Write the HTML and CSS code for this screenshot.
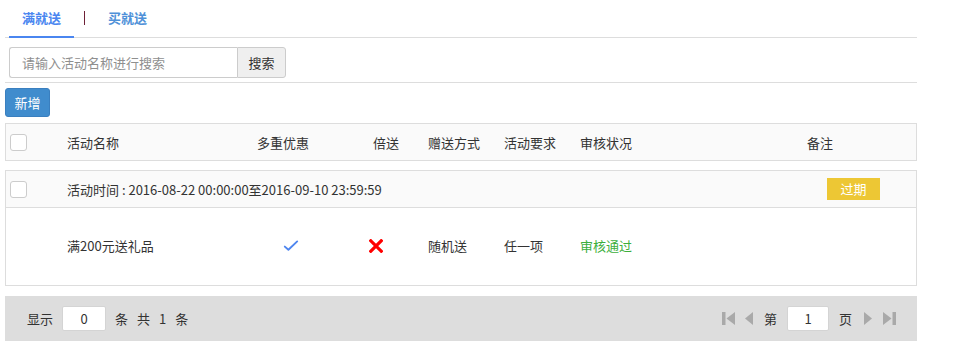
FILE: index.html
```html
<!DOCTYPE html>
<html lang="zh-CN">
<head>
<meta charset="utf-8">
<title>满就送</title>
<link rel="stylesheet" href="styles.css">
</head>
<body>
<div class="page">
  <div class="tabs">
    <a class="tab active">满就送</a>
    <span class="tab-sep"></span>
    <a class="tab">买就送</a>
  </div>

  <div class="search-row">
    <div class="search">
      <input class="search-input" type="text" placeholder="请输入活动名称进行搜索">
      <button class="search-btn">搜索</button>
    </div>
  </div>

  <button class="btn-add">新增</button>

  <div class="thead grid">
    <div class="c-check"><span class="checkbox"></span></div>
    <div>活动名称</div>
    <div>多重优惠</div>
    <div>倍送</div>
    <div>赠送方式</div>
    <div>活动要求</div>
    <div>审核状况</div>
    <div class="c-note">备注</div>
  </div>

  <div class="group">
    <div class="group-head">
      <div class="c-check"><span class="checkbox"></span></div>
      <div class="group-time">活动时间 : 2016-08-22 00:00:00至2016-09-10 23:59:59</div>
      <span class="badge">过期</span>
    </div>
    <div class="group-body grid">
      <div class="c-check"></div>
      <div>满200元送礼品</div>
      <div class="c-multi">
        <svg class="ico-check" width="16" height="12" viewBox="0 0 16 12"><path d="M1.8 6.6 L5.4 9.8 L14.2 1.4" fill="none" stroke="#4f86ef" stroke-width="1.9" stroke-linecap="round" stroke-linejoin="round"/></svg>
      </div>
      <div class="c-double">
        <svg class="ico-cross" width="14" height="14" viewBox="0 0 14 14"><path d="M1.8 1.8 L12.2 12.2 M12.2 1.8 L1.8 12.2" stroke="#ff0000" stroke-width="3.2" stroke-linecap="square"/></svg>
      </div>
      <div>随机送</div>
      <div>任一项</div>
      <div class="ok">审核通过</div>
      <div></div>
    </div>
  </div>

  <div class="footer">
    <div class="f-left">
      <span>显示</span>
      <input class="f-input" type="text" value="0">
      <span class="f-word">条</span>
      <span class="f-word">共</span>
      <span class="f-word">1</span>
      <span class="f-word">条</span>
    </div>
    <div class="f-right">
      <svg class="pg" width="13" height="13" viewBox="0 0 13 13"><rect x="0" y="0" width="3.5" height="13" fill="#a9a9a9"/><path d="M13 0 L4.5 6.5 L13 13 Z" fill="#a9a9a9"/></svg>
      <svg class="pg pg-prev" width="8" height="13" viewBox="0 0 8 13"><path d="M8 0 L0 6.5 L8 13 Z" fill="#a9a9a9"/></svg>
      <span class="pg-word">第</span>
      <input class="f-input pg-input" type="text" value="1">
      <span class="pg-word pg-word2">页</span>
      <svg class="pg pg-next" width="8" height="13" viewBox="0 0 8 13"><path d="M0 0 L8 6.5 L0 13 Z" fill="#a9a9a9"/></svg>
      <svg class="pg pg-last" width="13" height="13" viewBox="0 0 13 13"><path d="M0 0 L8.5 6.5 L0 13 Z" fill="#a9a9a9"/><rect x="9.5" y="0" width="3.5" height="13" fill="#a9a9a9"/></svg>
    </div>
  </div>
</div>
</body>
</html>
```

FILE: styles.css
```css
* { box-sizing: border-box; }
html, body { margin: 0; padding: 0; background: #fff; }
body {
  font-family: "Noto Sans CJK SC", "Microsoft YaHei", sans-serif;
  font-size: 13px;
  color: #333;
}
.page { width: 912px; margin-left: 5px; }

/* tabs */
.tabs {
  height: 38px;
  border-bottom: 1px solid #dddddd;
  display: flex;
  align-items: stretch;
}
.tab {
  display: block;
  padding: 0 13px;
  line-height: 35px;
  color: #4f91d8;
  font-weight: bold;
  font-size: 13px;
}
.tab.active {
  margin-left: 4px;
  border-bottom: 2px solid #4a86f0;
  margin-bottom: -1px;
  color: #4a86f0;
}
.tab-sep {
  width: 1px;
  height: 14px;
  margin: 11px 10px 0 10px;
  background: #6e2036;
}

/* search */
.search-row {
  padding: 9px 0 4px 4px;
  border-bottom: 1px solid #dddddd;
}
.search { display: flex; height: 31px; }
.search-input {
  width: 228px;
  height: 31px;
  border: 1px solid #cccccc;
  border-right: none;
  border-radius: 3px 0 0 3px;
  padding: 0 12px;
  font: inherit;
  color: #555;
  outline: none;
}
.search-input::placeholder { color: #8f8f8f; }
.search-btn {
  width: 49px;
  height: 31px;
  border: 1px solid #cccccc;
  border-radius: 0 3px 3px 0;
  background: #efefef;
  font: inherit;
  color: #333;
  padding: 0;
}

.btn-add {
  display: block;
  margin-top: 5px;
  width: 45px;
  height: 29px;
  border: 1px solid #3a7fbf;
  border-radius: 3px;
  background: #408ccd;
  color: #fff;
  font: inherit;
  font-size: 13px;
  padding: 0;
}

/* table */
.grid {
  display: grid;
  grid-template-columns: 61px 190px 116px 55px 76px 76px 227px 1fr;
  align-items: center;
}
.thead {
  margin-top: 6px;
  height: 38px;
  border: 1px solid #dddddd;
  background: #fafafa;
}
.c-check { padding-left: 4px; display: flex; align-items: center; }
.checkbox {
  display: block;
  width: 17px;
  height: 17px;
  border: 1px solid #cccccc;
  border-radius: 3px;
  background: #fff;
}
.group {
  margin-top: 9px;
  border: 1px solid #dddddd;
}
.group-head {
  height: 37px;
  background: #fafafa;
  border-bottom: 1px solid #dddddd;
  display: flex;
  align-items: center;
}
.group-head .c-check { width: 61px; }
.group-time { flex: 1; }
.badge {
  width: 53px;
  height: 22px;
  line-height: 22px;
  text-align: center;
  background: #edc734;
  color: #fff;
  margin-right: 36px;
}
.group-body { height: 77px; padding-bottom: 2px; }
.c-multi { padding-left: 26px; display: flex; }
.c-double { padding-left: 0; margin-left: -4px; display: flex; }
.ok { color: #3caf3c; }

/* footer */
.footer {
  margin-top: 10px;
  height: 45px;
  background: #dddddd;
  display: flex;
  align-items: center;
  justify-content: space-between;
  padding: 0 21px 0 22px;
}
.f-left, .f-right { display: flex; align-items: center; }
.f-input {
  width: 44px;
  height: 25px;
  border: 1px solid #d4d4d4;
  border-radius: 2px;
  background: #fff;
  text-align: center;
  font: inherit;
  color: #333;
  margin: 0 9px 0 9px;
  padding: 0;
}
.f-word { margin-right: 9px; }
.pg-prev { margin-left: 10px; }
.pg-word { margin-left: 11px; }
.pg-input { width: 42px; margin: 0 10px 0 10px; }
.pg-word2 { margin-left: 0; }
.pg-next { margin-left: 12px; }
.pg-last { margin-left: 11px; }
```
